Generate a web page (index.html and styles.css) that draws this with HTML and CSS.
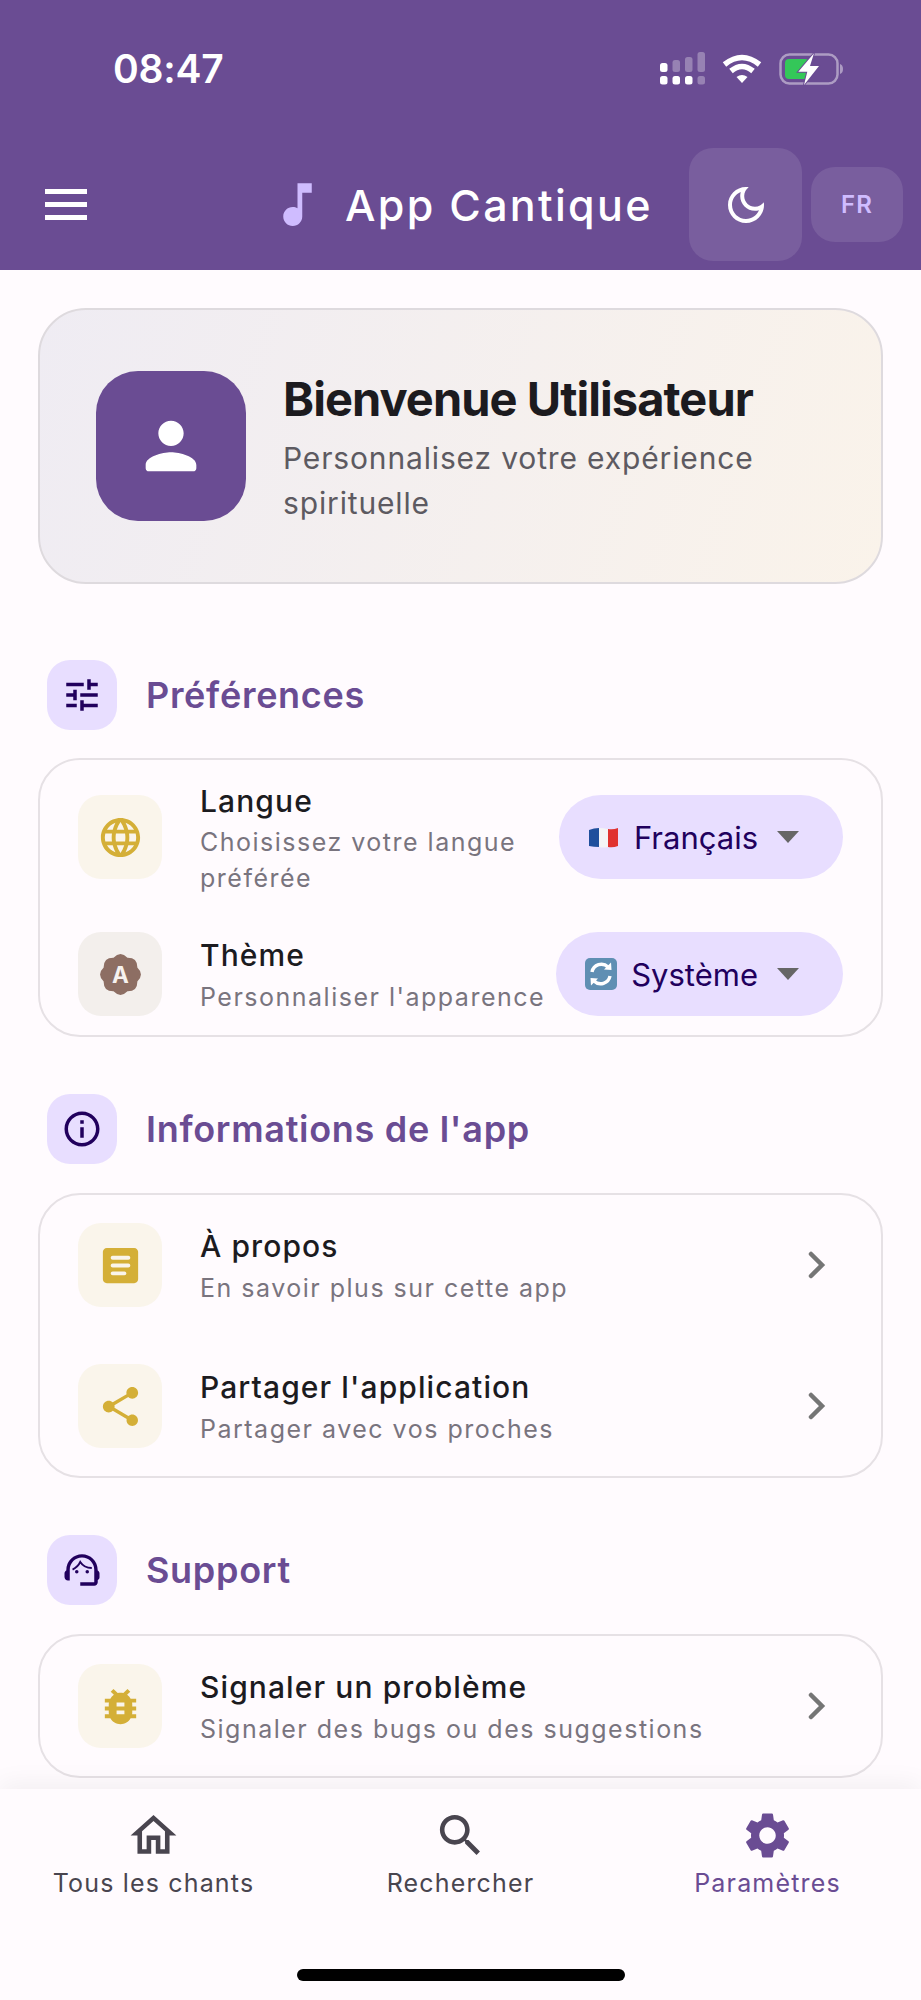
FILE: index.html
```html
<!DOCTYPE html>
<html lang="fr">
<head>
  <meta charset="UTF-8" />
  <meta name="viewport" content="width=device-width, initial-scale=1.0" />
  <title>App Cantique</title>
  <link rel="stylesheet" href="styles.css">
</head>
<body>
  <header class="header">
    <div class="status-bar">
      <span class="time">08:47</span>
      <div class="status-icons">
        <svg class="signal" width="46" height="34" viewBox="0 0 46 34">
          <g fill="#fff">
            <rect x="1" y="11" width="7.5" height="9" rx="2.5"/>
            <rect x="1" y="24" width="7.5" height="8.5" rx="2.5"/>
            <rect x="13.5" y="24" width="7.5" height="8.5" rx="2.5"/>
            <rect x="26" y="24" width="7.5" height="8.5" rx="2.5"/>
          </g>
          <g fill="#fff" fill-opacity=".3">
            <rect x="13.5" y="8" width="7.5" height="12" rx="2.5"/>
            <rect x="26" y="5" width="7.5" height="15" rx="2.5"/>
            <rect x="38.5" y="0" width="7.5" height="20" rx="2.5"/>
            <rect x="38.5" y="24" width="7.5" height="8.5" rx="2.5"/>
          </g>
        </svg>
        <svg class="wifi" width="42" height="30" viewBox="0 0 42 30">
          <path d="M3.5 10.5Q21-3.5 38.5 10.5M10 17Q21 8 32 17" fill="none" stroke="#fff" stroke-width="5.5"/>
          <path d="M15.5 23Q21 19 26.5 23L21 29Z" fill="#fff"/>
        </svg>
        <svg class="battery" width="66" height="34" viewBox="0 0 66 34">
          <rect x="1.5" y="2.5" width="57" height="29" rx="9" fill="none" stroke="#fff" stroke-opacity=".45" stroke-width="2.5"/>
          <rect x="6" y="7" width="24" height="20" rx="4" fill="#34c759"/>
          <path d="M61 12q3 1 3 5t-3 5z" fill="#fff" fill-opacity=".45"/>
          <path d="M35 1.3L19.3 19.7H28.3L25 33 40 14H31Z" fill="#fff" stroke="#6a4c93" stroke-width="2" paint-order="stroke"/>
        </svg>
      </div>
    </div>

    <div class="toolbar">
      <div class="menu-btn"><span></span><span></span><span></span></div>
      <div class="brand">
        <svg class="brand-note" viewBox="0 0 24 24"><path d="M12 3v10.55c-.59-.34-1.27-.55-2-.55-2.21 0-4 1.79-4 4s1.79 4 4 4 4-1.79 4-4V7h4V3h-6z"/></svg>
        <span class="brand-name">App Cantique</span>
      </div>
      <div class="theme-btn">
        <svg viewBox="0 0 24 24"><path d="M9.37 5.51C9.19 6.15 9.1 6.82 9.1 7.5c0 4.08 3.32 7.4 7.4 7.4.68 0 1.35-.09 1.99-.27C17.45 17.19 14.93 19 12 19c-3.86 0-7-3.14-7-7 0-2.93 1.81-5.45 4.37-6.49zM12 3c-4.97 0-9 4.03-9 9s4.03 9 9 9 9-4.03 9-9c0-.46-.04-.92-.1-1.36-.98 1.37-2.58 2.26-4.4 2.26-2.98 0-5.4-2.42-5.4-5.4 0-1.81.89-3.42 2.26-4.4-.44-.06-.9-.1-1.36-.1z"/></svg>
      </div>
      <div class="lang-btn">FR</div>
    </div>
  </header>

  <main class="content">
    <section class="hero">
      <div class="hero-avatar">
        <svg viewBox="0 0 24 24"><path d="M12 12c2.21 0 4-1.79 4-4s-1.79-4-4-4-4 1.79-4 4 1.79 4 4 4zm0 2c-2.67 0-8 1.34-8 4v1c0 .55.45 1 1 1h14c.55 0 1-.45 1-1v-1c0-2.66-5.33-4-8-4z"/></svg>
      </div>
      <div class="hero-text">
        <h1>Bienvenue Utilisateur</h1>
        <p>Personnalisez votre expérience spirituelle</p>
      </div>
    </section>

    <section class="section section-first">
      <div class="section-head">
        <div class="section-icon">
          <svg viewBox="0 0 24 24"><path d="M3 17v2h6v-2H3zM3 5v2h10V5H3zm10 16v-2h8v-2h-8v-2h-2v6h2zM7 9v2H3v2h4v2h2V9H7zm14 4v-2H11v2h10zm-6-4h2V7h4V5h-4V3h-2v6z"/></svg>
        </div>
        <h2>Préférences</h2>
      </div>
      <div class="card card-compact">
        <div class="row">
          <div class="row-icon gold">
            <svg viewBox="0 0 24 24"><path d="M11.99 2C6.47 2 2 6.48 2 12s4.47 10 9.99 10C17.52 22 22 17.52 22 12S17.52 2 11.99 2zm6.93 6h-2.95c-.32-1.25-.78-2.45-1.38-3.56 1.84.63 3.37 1.91 4.33 3.56zM12 4.04c.83 1.2 1.48 2.53 1.91 3.96h-3.82c.43-1.43 1.08-2.76 1.91-3.96zM4.26 14C4.1 13.36 4 12.69 4 12s.1-1.36.26-2h3.38c-.08.66-.14 1.32-.14 2 0 .68.06 1.34.14 2H4.26zm.82 2h2.95c.32 1.25.78 2.45 1.38 3.56-1.84-.63-3.37-1.9-4.33-3.56zm2.95-8H5.08c.96-1.66 2.49-2.93 4.33-3.56C8.81 5.55 8.35 6.75 8.03 8zM12 19.96c-.83-1.2-1.48-2.53-1.91-3.96h3.82c-.43 1.43-1.08 2.76-1.91 3.96zM14.34 14H9.66c-.09-.66-.16-1.32-.16-2 0-.68.07-1.35.16-2h4.68c.09.65.16 1.32.16 2 0 .68-.07 1.34-.16 2zm.25 5.56c.6-1.11 1.06-2.31 1.38-3.56h2.95c-.96 1.65-2.49 2.93-4.33 3.56zM16.36 14c.08-.66.14-1.32.14-2 0-.68-.06-1.34-.14-2h3.38c.16.64.26 1.31.26 2s-.1 1.36-.26 2h-3.38z"/></svg>
          </div>
          <div class="row-text">
            <div class="row-title">Langue</div>
            <div class="row-sub">Choisissez votre langue préférée</div>
          </div>
          <div class="pill">
            <svg class="pill-emoji" width="29" height="21" viewBox="0 0 29 21">
              <path d="M0 3Q5 1 10 1V20Q5 20 0 19Z" fill="#1f4f9c"/>
              <path d="M10 1Q15 1 19 2V20Q15 21 10 20Z" fill="#f4f4f6"/>
              <path d="M19 2Q24 3 29 1V19Q24 21 19 20Z" fill="#e0322f"/>
            </svg>
            <span>Français</span>
            <i class="caret"></i>
          </div>
        </div>
        <div class="row">
          <div class="row-icon brown">
            <svg viewBox="0 0 24 24">
              <path d="M8.44 3.41Q12-.3 15.56 3.41Q20.7 3.3 20.59 8.44Q24.3 12 20.59 15.56Q20.7 20.7 15.56 20.59Q12 24.3 8.44 20.59Q3.3 20.7 3.41 15.56Q-.3 12 3.41 8.44Q3.3 3.3 8.44 3.41Z"/>
              <text x="12" y="16.2" text-anchor="middle" class="badge-letter">A</text>
            </svg>
          </div>
          <div class="row-text">
            <div class="row-title">Thème</div>
            <div class="row-sub">Personnaliser l'apparence</div>
          </div>
          <div class="pill pill-system">
            <svg class="pill-emoji" width="32" height="32" viewBox="0 0 32 32">
              <rect width="32" height="32" rx="5" fill="#5f8fb3"/>
              <path d="M7 14a9.5 9.5 0 0 1 16-5" fill="none" stroke="#fff" stroke-width="3.4"/>
              <path d="M19 11.5l7.5.5-.5-7.5z" fill="#fff"/>
              <path d="M25 18a9.5 9.5 0 0 1-16 5" fill="none" stroke="#fff" stroke-width="3.4"/>
              <path d="M13 20.5l-7.5-.5.5 7.5z" fill="#fff"/>
            </svg>
            <span>Système</span>
            <i class="caret"></i>
          </div>
        </div>
      </div>
    </section>

    <section class="section">
      <div class="section-head">
        <div class="section-icon">
          <svg viewBox="0 0 24 24"><path d="M11 7h2v2h-2zm0 4h2v6h-2zm1-9C6.48 2 2 6.48 2 12s4.48 10 10 10 10-4.48 10-10S17.52 2 12 2zm0 18c-4.41 0-8-3.59-8-8s3.59-8 8-8 8 3.59 8 8-3.59 8-8 8z"/></svg>
        </div>
        <h2>Informations de l'app</h2>
      </div>
      <div class="card">
        <div class="row">
          <div class="row-icon gold">
            <svg viewBox="0 0 24 24"><path d="M19 3H5c-1.1 0-2 .9-2 2v14c0 1.1.9 2 2 2h14c1.100 0 2-.9 2-2V5c0-1.100-.9-2-2-2zm-5 14H8c-.55 0-1-.45-1-1s.45-1 1-1h6c.55 0 1 .45 1 1s-.45 1-1 1zm2-4H8c-.55 0-1-.45-1-1s.45-1 1-1h8c.55 0 1 .45 1 1s-.45 1-1 1zm0-4H8c-.55 0-1-.45-1-1s.45-1 1-1h8c.55 0 1 .45 1 1s-.45 1-1 1z"/></svg>
          </div>
          <div class="row-text">
            <div class="row-title">À propos</div>
            <div class="row-sub">En savoir plus sur cette app</div>
          </div>
          <div class="chevron"><svg viewBox="0 0 18 28"><path d="M3 3l11 11L3 25"/></svg></div>
        </div>
        <div class="row">
          <div class="row-icon gold">
            <svg viewBox="0 0 24 24"><path d="M18 16.08c-.76 0-1.44.3-1.96.77L8.91 12.700c.05-.23.09-.46.09-.7s-.04-.47-.09-.7l7.05-4.110c.54.5 1.25.81 2.040.81 1.660 0 3-1.340 3-3s-1.340-3-3-3-3 1.340-3 3c0 .24.04.47.09.7L8.04 9.810C7.5 9.310 6.790 9 6 9c-1.660 0-3 1.340-3 3s1.340 3 3 3c.79 0 1.5-.31 2.040-.81l7.120 4.160c-.05.21-.08.43-.08.65 0 1.610 1.310 2.920 2.920 2.920 1.610 0 2.920-1.310 2.920-2.920s-1.310-2.920-2.920-2.920z"/></svg>
          </div>
          <div class="row-text">
            <div class="row-title">Partager l'application</div>
            <div class="row-sub">Partager avec vos proches</div>
          </div>
          <div class="chevron"><svg viewBox="0 0 18 28"><path d="M3 3l11 11L3 25"/></svg></div>
        </div>
      </div>
    </section>

    <section class="section">
      <div class="section-head">
        <div class="section-icon">
          <svg viewBox="0 0 24 24">
            <path d="M21 12.220C21 6.730 16.740 3 12 3c-4.690 0-9 3.650-9 9.280-.6.34-1 .98-1 1.720v2c0 1.100.9 2 2 2h1v-6.100c0-3.870 3.130-7 7-7s7 3.130 7 7V19h-8v2h8c1.100 0 2-.9 2-2v-1.220c.59-.31 1-.92 1-1.640v-2.300c0-.7-.41-1.310-1-1.620z"/>
            <circle cx="9" cy="13" r="1"/><circle cx="15" cy="13" r="1"/>
            <path class="agent-hair" d="M6.600 11.800C8.600 10.800 10.200 9.200 11 7.400 12.400 9.600 14.800 10.800 17.600 10.900"/>
          </svg>
        </div>
        <h2>Support</h2>
      </div>
      <div class="card">
        <div class="row">
          <div class="row-icon gold">
            <svg viewBox="0 0 24 24"><path d="M20 8h-2.810c-.45-.78-1.070-1.450-1.820-1.960L17 4.410 15.590 3l-2.170 2.170C12.960 5.060 12.490 5 12 5c-.49 0-.96.06-1.410.17L8.410 3 7 4.410l1.620 1.630C7.880 6.550 7.260 7.220 6.810 8H4v2h2.090c-.05.33-.09.66-.09 1v1H4v2h2v1c0 .34.04.67.09 1H4v2h2.810c1.040 1.790 2.970 3 5.190 3s4.150-1.210 5.190-3H20v-2h-2.090c.05-.33.09-.66.09-1v-1h2v-2h-2v-1c0-.34-.04-.67-.09-1H20V8zm-6 8h-4v-2h4v2zm0-4h-4v-2h4v2z"/></svg>
          </div>
          <div class="row-text">
            <div class="row-title">Signaler un problème</div>
            <div class="row-sub">Signaler des bugs ou des suggestions</div>
          </div>
          <div class="chevron"><svg viewBox="0 0 18 28"><path d="M3 3l11 11L3 25"/></svg></div>
        </div>
      </div>
    </section>
  </main>

  <nav class="bottom-nav">
    <div class="tabs">
      <div class="tab">
        <svg viewBox="0 0 24 24"><path d="M12 5.690l5 4.500V18h-2v-6H9v6H7v-7.810l5-4.500M12 3L2 12h3v8h6v-6h2v6h6v-8h3L12 3z"/></svg>
        <span>Tous les chants</span>
      </div>
      <div class="tab">
        <svg viewBox="0 0 24 24"><path d="M15.500 14h-.79l-.28-.27C15.410 12.590 16 11.110 16 9.500 16 5.910 13.090 3 9.500 3S3 5.910 3 9.500 5.910 16 9.500 16c1.610 0 3.090-.59 4.230-1.570l.27.28v.79l5 4.990L20.490 19l-4.990-5zm-6 0C7.010 14 5 11.990 5 9.500S7.010 5 9.500 5 14 7.010 14 9.500 11.990 14 9.500 14z"/></svg>
        <span>Rechercher</span>
      </div>
      <div class="tab tab-active">
        <svg viewBox="0 0 24 24"><path d="M19.140 12.940c.04-.3.06-.61.06-.94 0-.32-.02-.64-.07-.94l2.030-1.580c.18-.14.23-.41.12-.61l-1.920-3.320c-.12-.22-.37-.29-.59-.22l-2.390.96c-.5-.38-1.030-.7-1.620-.94l-.36-2.540c-.04-.24-.24-.41-.48-.41h-3.840c-.24 0-.43.17-.47.41l-.36 2.540c-.59.24-1.130.57-1.620.94l-2.390-.96c-.22-.08-.47 0-.59.22L2.740 8.870c-.12.21-.08.47.12.61l2.030 1.580c-.05.3-.09.63-.09.94s.02.64.07.94l-2.030 1.580c-.18.14-.23.41-.12.61l1.920 3.320c.12.22.37.29.59.22l2.390-.96c.5.38 1.030.7 1.620.94l.36 2.540c.05.24.24.41.48.41h3.840c.24 0 .44-.17.47-.41l.36-2.540c.59-.24 1.130-.56 1.620-.94l2.390.96c.22.08.47 0 .59-.22l1.920-3.320c.12-.22.07-.47-.12-.61l-2.010-1.580zM12 15.600c-1.980 0-3.600-1.620-3.600-3.600s1.620-3.600 3.600-3.600 3.600 1.620 3.600 3.600-1.620 3.600-3.600 3.600z"/></svg>
        <span>Paramètres</span>
      </div>
    </div>
    <div class="home-indicator"></div>
  </nav>
</body>
</html>
```

FILE: styles.css
```css
html, body {
  height: 2000px;
  overflow: hidden;
}

body {
  margin: 0;
  display: flex;
  flex-direction: column;
  background-color: #fffbfe;
  color: #1c1b1f;
  font-family: Inter, "Noto Sans", sans-serif;
}

svg {
  display: block;
  flex-shrink: 0;
}

/* header */
.header {
  height: 270px;
  flex-shrink: 0;
  background-color: #6a4c93;
  color: white;
}

.status-bar {
  height: 148px;
  display: flex;
  justify-content: space-between;
  padding: 46px 76px 0 113px;
  box-sizing: border-box;
}

.time {
  font-size: 39px;
  font-weight: 600;
  letter-spacing: -0.2px;
  line-height: 46px;
}

.status-icons {
  display: flex;
  align-items: flex-start;
  margin-top: 6px;
}

.wifi {
  margin: 2px 0 0 16px;
}

.battery {
  margin-left: 16px;
}

.toolbar {
  display: flex;
  align-items: center;
  padding-left: 45px;
  padding-right: 18px;
}

.menu-btn {
  width: 42px;
  display: flex;
  flex-direction: column;
  gap: 8px;
}

.menu-btn span {
  height: 5px;
  background-color: white;
}

.brand {
  display: flex;
  align-items: center;
  gap: 19px;
  margin-left: 182px;
  margin-right: auto;
}

.brand-note {
  width: 57px;
  height: 57px;
  fill: #cfbcff;
}

.brand-name {
  font-size: 43px;
  font-weight: 500;
  letter-spacing: 2.3px;
}

.theme-btn {
  width: 113px;
  height: 113px;
  border-radius: 24px;
  background-color: rgba(255, 255, 255, 0.1);
  display: flex;
  align-items: center;
  justify-content: center;
}

.theme-btn svg {
  width: 48px;
  height: 48px;
  fill: white;
}

.lang-btn {
  width: 92px;
  height: 75px;
  margin-left: 9px;
  border-radius: 24px;
  background-color: rgba(255, 255, 255, 0.1);
  color: #cfbcff;
  font-size: 24px;
  font-weight: 600;
  letter-spacing: 1px;
  display: flex;
  align-items: center;
  justify-content: center;
}

/* content */
.content {
  flex: 1;
  min-height: 0;
  overflow: hidden;
  padding: 38px 38px 0;
}

.hero {
  height: 276px;
  box-sizing: border-box;
  border: 2.5px solid #dedade;
  border-radius: 48px;
  background: linear-gradient(108deg, #efecf3, #faf3ea);
  display: flex;
  align-items: center;
  gap: 37px;
  padding-left: 56px;
  padding-right: 55px;
}

.hero-avatar {
  width: 150px;
  height: 150px;
  flex-shrink: 0;
  border-radius: 42px;
  background-color: #6a4c93;
  display: flex;
  align-items: center;
  justify-content: center;
}

.hero-avatar svg {
  width: 76px;
  height: 76px;
  fill: white;
}

.hero-text {
  padding-top: 5px;
}

.hero-text h1 {
  margin: 0 0 9px;
  font-size: 47px;
  font-weight: 700;
  letter-spacing: -0.95px;
  line-height: 56px;
}

.hero-text p {
  margin: 0;
  font-size: 30px;
  line-height: 45px;
  letter-spacing: 0.85px;
  color: #5d5a61;
}

.section {
  margin-top: 57px;
}

.section-first {
  margin-top: 76px;
}

.section-head {
  display: flex;
  align-items: center;
  gap: 29px;
  padding-left: 9px;
  margin-bottom: 29px;
}

.section-first .section-head {
  margin-bottom: 28px;
}

.section-head h2 {
  margin: 0;
  font-size: 36px;
  font-weight: 600;
  letter-spacing: 0.7px;
  color: #6a4c93;
}

.section-icon {
  width: 70px;
  height: 70px;
  border-radius: 23px;
  background-color: #e8deff;
  display: flex;
  align-items: center;
  justify-content: center;
}

.section-icon svg {
  width: 42px;
  height: 42px;
  fill: #21005d;
}

.agent-hair {
  fill: none;
  stroke: #21005d;
  stroke-width: 1.1;
}

.card {
  border: 2px solid #e6e1e5;
  border-radius: 42px;
  padding: 28px 0;
  display: flex;
  flex-direction: column;
  gap: 57px;
}

.card-compact {
  padding: 18.5px 0 19px;
  gap: 36px;
}

.row {
  display: flex;
  align-items: center;
  padding: 0 38px;
}

.row-icon {
  width: 84px;
  height: 84px;
  flex-shrink: 0;
  margin-right: 38px;
  border-radius: 23px;
  display: flex;
  align-items: center;
  justify-content: center;
}

.row-icon svg {
  width: 47px;
  height: 47px;
}

.gold {
  background-color: #faf5eb;
  fill: #d4af37;
}

.brown {
  background-color: #f3efec;
  fill: #8d6e63;
}

.badge-letter {
  font-size: 11.5px;
  font-weight: 700;
  fill: #f6f2ef;
}

.row-text {
  flex: 1;
  min-width: 0;
}

.row-title {
  font-size: 30px;
  font-weight: 500;
  line-height: 44px;
  letter-spacing: 1.1px;
}

.row-sub {
  margin-top: 1.5px;
  font-size: 25px;
  line-height: 36px;
  letter-spacing: 1.5px;
  color: #79747e;
}

.pill {
  height: 84px;
  flex-shrink: 0;
  margin-left: 6px;
  padding: 0 44px 0 30px;
  border-radius: 42px;
  background-color: #e8deff;
  color: #21005d;
  font-size: 31px;
  display: flex;
  align-items: center;
}

.pill-system {
  padding-left: 29px;
}

.pill-system .pill-emoji {
  margin-right: 14px;
}

.pill-emoji {
  margin-right: 16px;
}

.caret {
  width: 0;
  height: 0;
  margin-left: 19px;
  border-left: 11.5px solid transparent;
  border-right: 11.5px solid transparent;
  border-top: 12px solid #666;
}

.chevron {
  width: 52px;
  display: flex;
  justify-content: center;
}

.chevron svg {
  width: 18px;
  height: 28px;
  fill: none;
  stroke: #757575;
  stroke-width: 4.500;
  stroke-linecap: round;
}

/* bottom nav */
.bottom-nav {
  position: relative;
  height: 211px;
  flex-shrink: 0;
  box-sizing: border-box;
  padding-top: 19px;
  background-color: #fffbfe;
  box-shadow: 0 -6px 24px rgba(0, 0, 0, 0.05);
  display: flex;
  flex-direction: column;
  align-items: center;
}

.tabs {
  width: 100%;
  display: grid;
  grid-template-columns: repeat(3, 1fr);
}

.tab {
  display: flex;
  flex-direction: column;
  align-items: center;
  gap: 2px;
  font-size: 25px;
  line-height: 36px;
  letter-spacing: 1.17px;
  color: #49454f;
  fill: #49454f;
}

.tab svg {
  width: 55px;
  height: 55px;
}

.tab-active {
  color: #6a4c93;
  fill: #6a4c93;
}

.home-indicator {
  width: 328px;
  height: 12px;
  margin-top: auto;
  margin-bottom: 19px;
  border-radius: 6px;
  background-color: black;
}
```
